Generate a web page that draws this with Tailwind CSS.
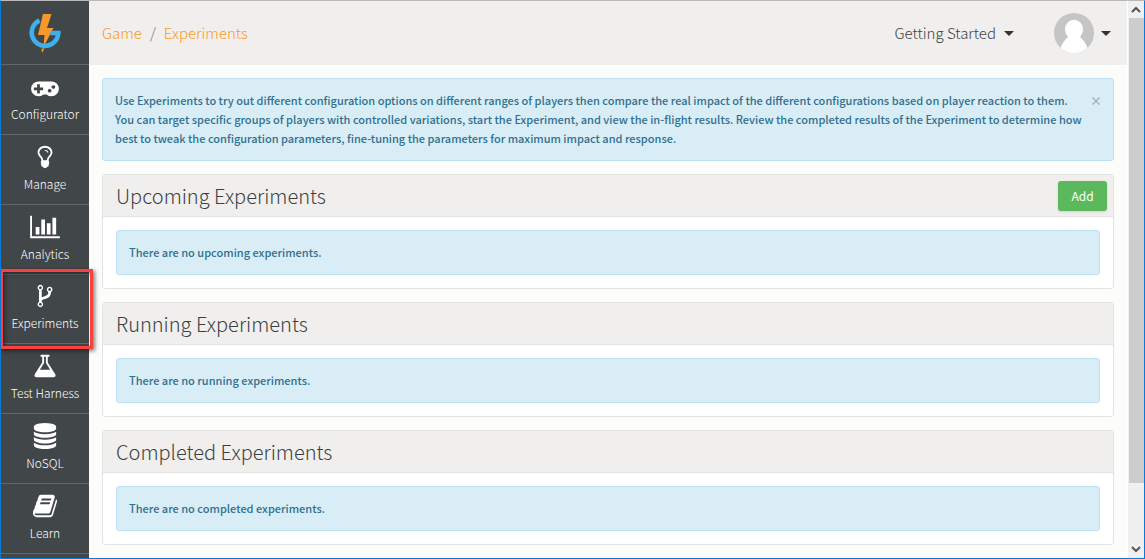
<!DOCTYPE html>
<html lang="en">
<head>
<meta charset="utf-8">
<title>Experiments</title>
<script src="https://cdn.jsdelivr.net/npm/@tailwindcss/browser@4"></script>
</head>
<body class="flex h-screen overflow-hidden border border-[#0a7ad8] border-t-[#b9b9b9] bg-[#fcfcfa] font-['Noto_Sans_CJK_SC','Open_Sans',sans-serif] text-xs text-[#3b3f42]">

<aside class="w-22 shrink-0 bg-[#414648] font-light text-white">
  <a href="#" aria-label="Home" class="flex h-16 items-center justify-center border-b border-[#636769]">
    <svg class="h-10 w-8" viewBox="0 0 32 40"><path d="M14 1h8.500l-4.500 14h6.500L14.500 34l1-12H9z" fill="#f7982a"/><path d="M10.500 7.500A13.300 13.300 0 1 0 29.300 20H21.500" fill="none" stroke="#3fb0ea" stroke-width="4.600"/><path d="M12.500 35.500h3L13 40z" fill="#f7982a"/></svg>
  </a>
  <nav>
    <a href="#" class="flex h-[70px] flex-col items-center border-b border-[#636769] pt-[9px]">
      <svg class="h-[26px] w-7 fill-current" viewBox="0 0 1920 1792"><path d="M832 1088v-128q0-14-9-23t-23-9h-192v-192q0-14-9-23t-23-9h-128q-14 0-23 9t-9 23v192h-192q-14 0-23 9t-9 23v128q0 14 9 23t23 9h192v192q0 14 9 23t23 9h128q14 0 23-9t9-23v-192h192q14 0 23-9t9-23zm576 64q0-53-37.500-90.500t-90.500-37.500-90.500 37.500-37.500 90.500 37.500 90.500 90.500 37.500 90.500-37.500 37.500-90.500zm256-256q0-53-37.500-90.500t-90.500-37.500-90.500 37.500-37.500 90.500 37.500 90.500 90.500 37.500 90.500-37.500 37.500-90.500zm256 128q0 212-150 362t-362 150q-192 0-338-128h-220q-146 128-338 128-212 0-362-150t-150-362 150-362 362-150h896q212 0 362 150t150 362z"/></svg>
      <span class="leading-7">Configurator</span>
    </a>
    <a href="#" class="flex h-[70px] flex-col items-center border-b border-[#636769] pt-[9px]">
      <svg class="size-[26px] fill-current" viewBox="0 0 1792 1792"><path d="M1120 576q0 13-9.500 22.500t-22.500 9.500-22.500-9.500-9.500-22.500q0-46-54-71t-106-25q-13 0-22.500-9.500t-9.500-22.500 9.500-22.500 22.500-9.500q50 0 99.500 16t87 54 37.500 90zm160 0q0-72-34.500-134t-90-101.500-123-62-136.500-22.500-136.500 22.500-123 62-90 101.500-34.500 134q0 101 68 180 10 11 30.500 33t30.500 33q128 153 141 298h228q13-145 141-298 10-11 30.500-33t30.500-33q68-79 68-180zm128 0q0 155-103 268-45 49-74.500 87t-59.500 95.500-34 107.500q47 28 47 82 0 37-25 64 25 27 25 64 0 52-45 81 13 23 13 47 0 46-31.500 71t-77.500 25q-20 44-60 70t-87 26-87-26-60-70q-46 0-77.500-25t-31.500-71q0-24 13-47-45-29-45-81 0-37 25-64-25-27-25-64 0-54 47-82-4-50-34-107.500t-59.500-95.500-74.500-87q-103-113-103-268 0-99 44.500-184.500t117-142 164-89 186.500-32.500 186.500 32.500 164 89 117 142 44.500 184.500z"/></svg>
      <span class="leading-7">Manage</span>
    </a>
    <a href="#" class="flex h-[70px] flex-col items-center border-b border-[#636769] pt-[9px]">
      <svg class="h-[26px] w-[30px] fill-current" viewBox="0 0 2048 1792"><path d="M640 896v512h-256v-512h256zm384-512v1024h-256v-1024h256zm1024 1152v128h-2048v-1536h128v1408h1920zm-640-896v768h-256v-768h256zm384-384v1152h-256v-1152h256z"/></svg>
      <span class="leading-7">Analytics</span>
    </a>
    <a href="#" aria-current="page" class="relative flex h-[69px] flex-col items-center border-b border-[#636769] pt-2">
      <svg class="h-[26px] w-4 fill-current" viewBox="0 0 1024 1792"><path d="M288 1472q0-40-28-68t-68-28-68 28-28 68 28 68 68 28 68-28 28-68zm0-1152q0-40-28-68t-68-28-68 28-28 68 28 68 68 28 68-28 28-68zm640 128q0-40-28-68t-68-28-68 28-28 68 28 68 68 28 68-28 28-68zm96 0q0 52-26 96.500t-70 69.500q-2 287-226 414-67 38-203 81-128 40-169.500 71t-41.500 100v26q44 25 70 69.500t26 96.500q0 80-56 136t-136 56-136-56-56-136q0-52 26-96.500t70-69.500v-820q-44-25-70-69.500t-26-96.500q0-80 56-136t136-56 136 56 56 136q0 52-26 96.500t-70 69.500v497q54-26 154-57 55-17 87.500-29.500t70.500-31 59-39.500 40.500-51 28-69.500 8.500-91.500q-44-25-70-69.500t-26-96.500q0-80 56-136t136-56 136 56 56 136z"/></svg>
      <span class="leading-7">Experiments</span>
      <span class="absolute -top-1.5 -right-1 -bottom-1.5 -left-px border-3 border-[#fb4040] shadow-[2px_2px_4px_rgba(0,0,0,0.5),inset_2px_2px_4px_rgba(0,0,0,0.4)]"></span>
    </a>
    <a href="#" class="flex h-[70px] flex-col items-center border-b border-[#636769] pt-[9px]">
      <svg class="size-[26px] fill-current" viewBox="0 0 1792 1792"><path d="M1591 1448q56 89 21.500 152.500t-140.500 63.500h-1152q-106 0-140.500-63.500t21.500-152.500l503-793v-399h-64q-26 0-45-19t-19-45 19-45 45-19h512q26 0 45 19t19 45-19 45-45 19h-64v399zm-779-725l-272 429h712l-272-429-20-31v-436h-128v436z"/></svg>
      <span class="leading-7">Test Harness</span>
    </a>
    <a href="#" class="flex h-[70px] flex-col items-center border-b border-[#636769] pt-[9px]">
      <svg class="size-[26px] fill-current" viewBox="0 0 1792 1792"><path d="M896 768q237 0 443-43t325-127v170q0 69-103 128t-280 93.500-385 34.500-385-34.500-280-93.500-103-128v-170q119 84 325 127t443 43zm0 768q237 0 443-43t325-127v170q0 69-103 128t-280 93.500-385 34.500-385-34.500-280-93.500-103-128v-170q119 84 325 127t443 43zm0-384q237 0 443-43t325-127v170q0 69-103 128t-280 93.500-385 34.500-385-34.500-280-93.500-103-128v-170q119 84 325 127t443 43zm0-1152q208 0 385 34.500t280 93.500 103 128v128q0 69-103 128t-280 93.500-385 34.500-385-34.500-280-93.500-103-128v-128q0-69 103-128t280-93.500 385-34.500z"/></svg>
      <span class="leading-7">NoSQL</span>
    </a>
    <a href="#" class="flex h-[70px] flex-col items-center border-b border-[#636769] pt-[9px]">
      <svg class="size-[26px] fill-current" viewBox="0 0 1792 1792"><path d="M1703 478q40 57 18 129l-275 906q-19 64-76.500 107.500t-122.500 43.500h-923q-77 0-148.500-53.500t-99.500-131.500q-24-67-2-127 0-4 3-27t4-37q1-8-3-21.500t-3-19.500q2-11 8-21t16.500-23.500 16.500-23.500q23-38 45-91.500t30-91.500q3-10 .5-30t-.5-28q3-11 17-28t17-23q21-36 42-92t25-90q1-9-2.500-32t.5-28q4-13 22-30.500t22-22.500q19-26 42.500-84.500t27.500-96.500q1-8-3-25.500t-2-26.500q2-8 9-18t18-23 17-21q8-12 16.500-30.500t15-35 16-36 19.500-32 26.500-23.500 36-11.500 47.500 5.500l-1 3q38-9 51-9h761q74 0 114 56t18 130l-274 906q-36 119-71.500 153.500t-128.500 34.500h-869q-27 0-38 15-11 16-1 43 24 70 144 70h923q29 0 56-15.500t35-41.500l300-987q7-22 5-57 38 15 59 43zm-1064 2q-4 13 2 22.500t20 9.500h608q13 0 25.500-9.500t16.500-22.500l21-64q4-13-2-22.500t-20-9.500h-608q-13 0-25.500 9.500t-16.500 22.500zm-83 256q-4 13 2 22.500t20 9.500h608q13 0 25.500-9.500t16.500-22.500l21-64q4-13-2-22.500t-20-9.500h-608q-13 0-25.500 9.500t-16.500 22.500z"/></svg>
      <span class="leading-7">Learn</span>
    </a>
  </nav>
</aside>

<div class="min-w-0 flex-1">
  <header class="flex h-16 items-center justify-between bg-[#f0efee] pr-4 pl-[13px] text-[15px] leading-6">
    <nav aria-label="Breadcrumb" class="flex gap-2 font-light text-[#fb9a22]">
      <a href="#">Game</a><span class="text-[#777]">/</span><a href="#">Experiments</a>
    </nav>
    <div class="flex items-center gap-10">
      <button type="button" class="flex items-center gap-2 font-light">Getting Started
        <svg class="h-1.5 w-2.5" viewBox="0 0 10 6"><path d="M0 1h10L5 6z" fill="#333"/></svg>
      </button>
      <button type="button" aria-label="Account" class="flex items-center gap-[7px]">
        <svg class="size-10" viewBox="0 0 40 40"><clipPath id="c"><circle cx="20" cy="20" r="20"/></clipPath><g clip-path="url(#c)"><path fill="#c5c5c5" d="M0 0h40v40H0z"/><path fill="#fff" d="M6 36q3-8 8-12h12q5 4 8 12v4H6z"/><ellipse cx="20" cy="16.500" rx="9" ry="9.800" fill="#fff"/></g></svg>
        <svg class="h-1.5 w-2.5" viewBox="0 0 10 6"><path d="M0 1h10L5 6z" fill="#333"/></svg>
      </button>
    </div>
  </header>
  <main class="flex flex-col gap-[13px] p-[13px]">
    <div role="alert" class="relative rounded-[3px] border border-[#bce0f1] bg-[#d9edf7] p-3 text-[11px] leading-[19px] font-medium text-[#31708f]">
      <p>Use Experiments to try out different configuration options on different ranges of players then compare the real impact of the different configurations based on player reaction to them.<br>You can target specific groups of players with controlled variations, start the Experiment, and view the in-flight results. Review the completed results of the Experiment to determine how<br>best to tweak the configuration parameters, fine-tuning the parameters for maximum impact and response.</p>
      <button type="button" aria-label="Close" class="absolute top-[18px] right-[13px] text-[#a3b5be]"><svg class="size-2" viewBox="0 0 8 8"><path d="M.5.5l7 7m0-7l-7 7" stroke="currentColor" stroke-width="1.500"/></svg></button>
    </div>
    <section class="rounded-[3px] border border-[#e2e2e2] bg-white">
      <div class="flex h-[42px] items-center justify-between border-b border-[#e2e2e2] bg-[#f0efee] pr-1.5 pl-[13px]">
        <h2 class="text-xl font-light">Upcoming Experiments</h2>
        <button type="button" class="h-[30px] w-[49px] rounded-[3px] bg-[#5cb85c] text-white shadow-sm">Add</button>
      </div>
      <div class="p-[13px]"><p class="rounded-[3px] border border-[#bce0f1] bg-[#d9edf7] p-3 text-[11px] leading-[19px] font-medium text-[#31708f]">There are no upcoming experiments.</p></div>
    </section>
    <section class="rounded-[3px] border border-[#e2e2e2] bg-white">
      <div class="flex h-[42px] items-center border-b border-[#e2e2e2] bg-[#f0efee] px-[13px]">
        <h2 class="text-xl font-light">Running Experiments</h2>
      </div>
      <div class="p-[13px]"><p class="rounded-[3px] border border-[#bce0f1] bg-[#d9edf7] p-3 text-[11px] leading-[19px] font-medium text-[#31708f]">There are no running experiments.</p></div>
    </section>
    <section class="rounded-[3px] border border-[#e2e2e2] bg-white">
      <div class="flex h-[42px] items-center border-b border-[#e2e2e2] bg-[#f0efee] px-[13px]">
        <h2 class="text-xl font-light">Completed Experiments</h2>
      </div>
      <div class="p-[13px]"><p class="rounded-[3px] border border-[#bce0f1] bg-[#d9edf7] p-3 text-[11px] leading-[19px] font-medium text-[#31708f]">There are no completed experiments.</p></div>
    </section>
  </main>
</div>

<div aria-hidden="true" class="flex w-[17px] shrink-0 flex-col items-center border-l border-white bg-[#f0f0f0]">
  <svg class="h-[17px] w-4 shrink-0" viewBox="0 0 16 17"><path d="M4 11l4-4 4 4" fill="none" stroke="#555" stroke-width="2"/></svg>
  <div class="w-[15px] flex-[465] bg-[#cdcdcd]"></div>
  <div class="flex-[58]"></div>
  <svg class="h-[17px] w-4 shrink-0" viewBox="0 0 16 17"><path d="M4 6l4 4 4-4" fill="none" stroke="#555" stroke-width="2"/></svg>
</div>
</body>
</html>
